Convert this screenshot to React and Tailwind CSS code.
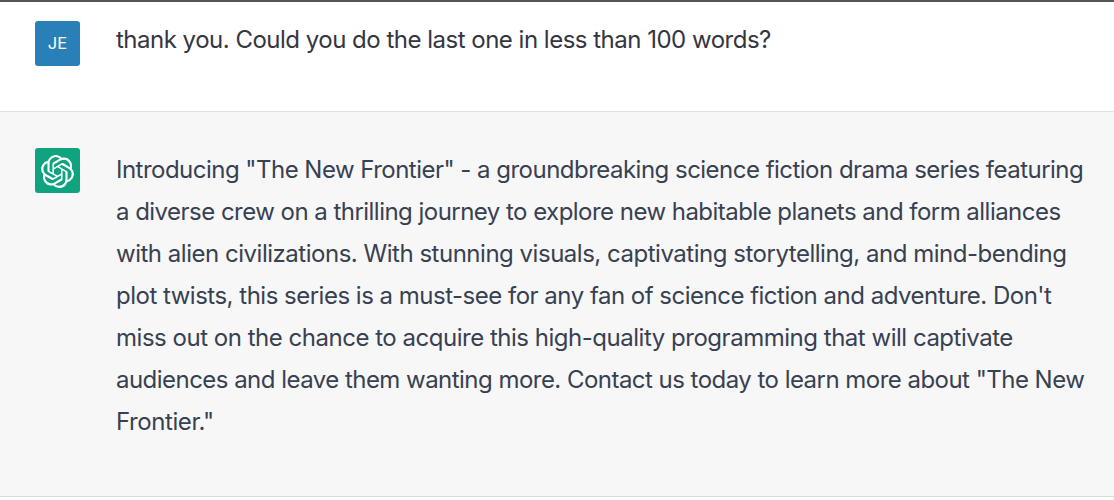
import { SiOpenai } from "react-icons/si";

const lines = [
  { text: 'Introducing "The New Frontier" - a groundbreaking science fiction drama series featuring', tracking: "tracking-[-0.52px]" },
  { text: "a diverse crew on a thrilling journey to explore new habitable planets and form alliances", tracking: "tracking-[-0.53px]" },
  { text: "with alien civilizations. With stunning visuals, captivating storytelling, and mind-bending", tracking: "tracking-[-0.48px]" },
  { text: "plot twists, this series is a must-see for any fan of science fiction and adventure. Don't", tracking: "tracking-[-0.5px]" },
  { text: "miss out on the chance to acquire this high-quality programming that will captivate", tracking: "tracking-[-0.48px]" },
  { text: 'audiences and leave them wanting more. Contact us today to learn more about "The New', tracking: "tracking-[-0.53px]" },
  { text: 'Frontier."', tracking: "tracking-[-0.42px]" },
];

function Avatar({ className, children }) {
  return (
    <div className={`flex size-[45px] shrink-0 items-center justify-center rounded-[3px] text-white ${className}`}>
      {children}
    </div>
  );
}

export default function App() {
  return (
    <main className="h-[500px] overflow-hidden border-t-2 border-[#565454] bg-white font-['Inter',sans-serif] text-2xl leading-[42px] text-[#343541]">
      <section className="flex h-[110px] gap-9 border-b border-[#e0e0e0] pl-[35px] pt-[19px]">
        <Avatar className="bg-[#2980b9] pb-px text-[16.5px]">JE</Avatar>
        <p className="-mt-[2px] whitespace-nowrap tracking-[-0.5px]">
          thank you. Could you do the last one in less than 100 words?
        </p>
      </section>
      <section className="flex h-[385px] gap-9 border-b border-[#d9d9d9] bg-[#f7f7f7] pl-[35px] pt-9 text-[#374151]">
        <Avatar className="bg-[#10a37f] pt-px">
          <SiOpenai size={33} />
        </Avatar>
        <div className="pt-px">
          {lines.map((line) => (
            <p key={line.text} className={`whitespace-nowrap ${line.tracking}`}>{line.text}</p>
          ))}
        </div>
      </section>
    </main>
  );
}
